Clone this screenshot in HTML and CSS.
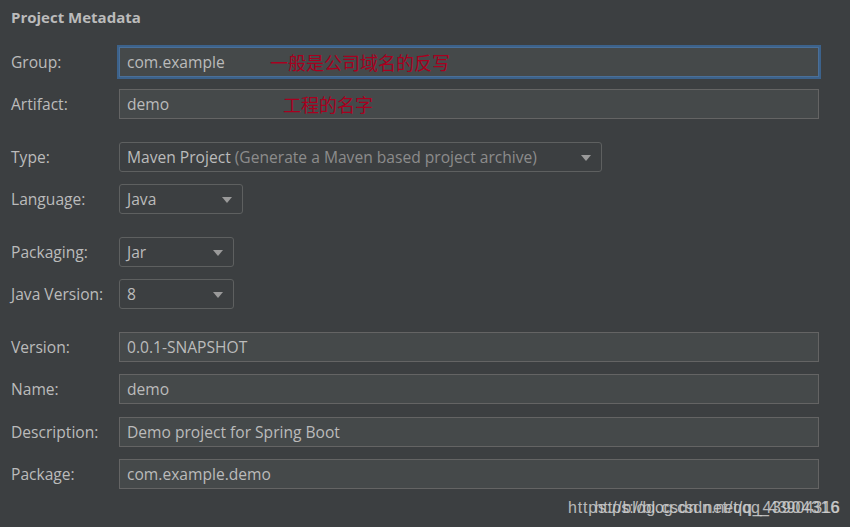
FILE: index.html
```html
<!DOCTYPE html>
<html lang="zh">
<head>
<meta charset="utf-8">
<title>Project Metadata</title>
<link rel="stylesheet" href="styles.css">
</head>
<body>
<div class="panel">
  <div class="title">Project Metadata</div>
  <div class="form">
    <div class="row">
      <label class="label">Group:</label>
      <div class="field wide focused"><span class="value">com.example</span><span class="note note-group">一般是公司域名的反写</span></div>
    </div>
    <div class="row">
      <label class="label">Artifact:</label>
      <div class="field wide"><span class="value">demo</span><span class="note note-artifact">工程的名字</span></div>
    </div>
    <div class="row group-start">
      <label class="label">Type:</label>
      <div class="field select type"><span class="value">Maven Project <span class="hint">(Generate a Maven based project archive)</span></span><span class="arrow"></span></div>
    </div>
    <div class="row">
      <label class="label">Language:</label>
      <div class="field select lang"><span class="value">Java</span><span class="arrow"></span></div>
    </div>
    <div class="row group-start">
      <label class="label">Packaging:</label>
      <div class="field select small"><span class="value">Jar</span><span class="arrow"></span></div>
    </div>
    <div class="row">
      <label class="label">Java Version:</label>
      <div class="field select small"><span class="value">8</span><span class="arrow"></span></div>
    </div>
    <div class="row group-start">
      <label class="label">Version:</label>
      <div class="field wide"><span class="value">0.0.1-SNAPSHOT</span></div>
    </div>
    <div class="row">
      <label class="label">Name:</label>
      <div class="field wide"><span class="value">demo</span></div>
    </div>
    <div class="row nudge">
      <label class="label">Description:</label>
      <div class="field wide"><span class="value">Demo project for Spring Boot</span></div>
    </div>
    <div class="row">
      <label class="label">Package:</label>
      <div class="field wide"><span class="value">com.example.demo</span></div>
    </div>
  </div>
</div>
<div class="watermark"><span class="wm-a">https://blog.csdn.net/qq_43904316</span><span class="wm-b">https://blog.csdn.net/qq_43904316</span></div>
</body>
</html>
```

FILE: styles.css
```css
html, body {
  margin: 0;
  padding: 0;
  background: #3c3f41;
}
body {
  width: 850px;
  height: 527px;
  overflow: hidden;
  position: relative;
  font-family: "Open Sans", "Noto Sans", "Noto Sans CJK SC", sans-serif;
  color: #bbbbbb;
}
.panel {
  padding: 7px 0 0 11px;
}
.title {
  font-size: 15px;
  font-weight: 700;
  line-height: 20px;
  height: 20px;
  color: #bbbbbb;
  margin-bottom: 20px;
}
.form {
  display: flex;
  flex-direction: column;
  gap: 12px;
}
.row {
  display: flex;
  align-items: center;
  height: 30px;
}
.row.group-start {
  margin-top: 11px;
}
.row.nudge {
  margin-top: 1px;
}
.label {
  width: 108px;
  flex: none;
  font-size: 15.6px;
  color: #bbbbbb;
  padding-bottom: 1px;
}
.field {
  position: relative;
  box-sizing: border-box;
  height: 30px;
  border: 1px solid #646464;
  background: #45494a;
  display: flex;
  align-items: center;
  padding-left: 7px;
  padding-bottom: 1px;
  font-size: 15.6px;
  color: #bbbbbb;
  white-space: nowrap;
}
.field.wide {
  width: 700px;
}
.field.focused {
  border-color: #4a6f98;
  box-shadow: 0 0 0 2px #3c628b;
}
.field.select {
  border-radius: 3px;
  background: #3c3f41;
  border-color: #5e6060;
}
.field.type { width: 483px; }
.field.lang { width: 124px; }
.field.small { width: 115px; }
.hint {
  color: #8c8c8c;
}
.arrow {
  position: absolute;
  right: 10px;
  top: 12px;
  width: 0;
  height: 0;
  border-left: 5px solid transparent;
  border-right: 5px solid transparent;
  border-top: 6px solid #9a9a9a;
}
.note {
  position: absolute;
  top: 50%;
  transform: translateY(-50%);
  font-family: "Noto Sans CJK SC", sans-serif;
  font-size: 18px;
  line-height: 1;
  color: #a8001f;
}
.note-group { left: 150px; }
.note-artifact { left: 163px; }
.watermark {
  position: absolute;
  right: 10px;
  top: 498px;
  height: 20px;
  font-family: "Liberation Sans", Arial, sans-serif;
  color: #cfcfcf;
  white-space: nowrap;
}
.wm-a {
  font-size: 16px;
  letter-spacing: 0.8px;
  line-height: 20px;
  opacity: 0.85;
}
.wm-b {
  position: absolute;
  right: 0;
  top: 0;
  font-size: 16px;
  line-height: 20px;
  opacity: 0.85;
}
```
